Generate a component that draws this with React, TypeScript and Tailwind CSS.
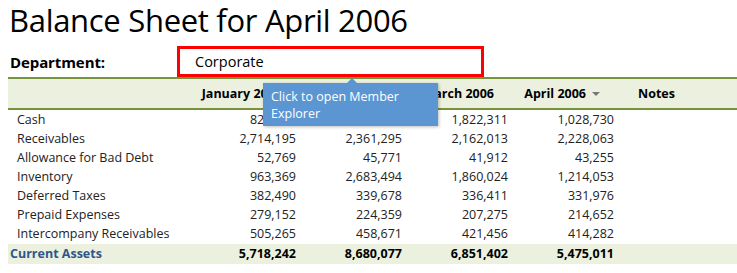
import React from 'react'

const months = ['January 2006', 'February 2006', 'March 2006', 'April 2006']

const rows: { label: string; values: string[] }[] = [
  { label: 'Cash', values: ['823,015', '1,567,480', '1,822,311', '1,028,730'] },
  { label: 'Receivables', values: ['2,714,195', '2,361,295', '2,162,013', '2,228,063'] },
  { label: 'Allowance for Bad Debt', values: ['52,769', '45,771', '41,912', '43,255'] },
  { label: 'Inventory', values: ['963,369', '2,683,494', '1,860,024', '1,214,053'] },
  { label: 'Deferred Taxes', values: ['382,490', '339,678', '336,411', '331,976'] },
  { label: 'Prepaid Expenses', values: ['279,152', '224,359', '207,275', '214,652'] },
  { label: 'Intercompany Receivables', values: ['505,265', '458,671', '421,456', '414,282'] },
]

const totals = ['5,718,242', '8,680,077', '6,851,402', '5,475,011']

export default function App() {
  return (
    <div
      className="relative w-[737px] h-[273px] bg-white text-black overflow-hidden"
      style={{ fontFamily: '"Open Sans", "Noto Sans", sans-serif' }}
    >
      {/* Title */}
      <div className="h-[46px] pl-[9px] text-[31px] leading-[40px] tracking-[-0.3px]">
        Balance Sheet for April 2006
      </div>

      {/* Department picker */}
      <div className="flex items-center h-[31px]">
        <div className="w-[177px] pl-[10px] pt-[1px] font-bold text-[15px] tracking-[-0.1px]">Department:</div>
        <div className="w-[307px] h-[31px] border-[3px] border-[#ff0000] flex items-center pl-[15px] pt-[1px] text-[14.5px]">
          Corporate
        </div>
      </div>

      {/* Table */}
      <div className="ml-[8px] text-[12.5px]">
        <div className="flex h-[33px] items-center pt-[2px] bg-[#ebf0df] border-y-2 border-[#77933c] font-bold">
          <div className="w-[182px]" />
          {months.map((m, i) => (
            <div key={m} className="w-[106px] text-right pr-[14px] whitespace-nowrap">
              {m}
              {i === 3 && (
                <span className="inline-block ml-[6px] mb-[2px] align-middle w-0 h-0 border-l-[4px] border-r-[4px] border-t-[4px] border-l-transparent border-r-transparent border-t-[#777]" />
              )}
            </div>
          ))}
          <div className="pl-[24px]">Notes</div>
        </div>

        <div className="pt-[1px]">
          {rows.map((r) => (
            <div key={r.label} className="flex h-[19px] items-center text-[#222]">
              <div className="w-[182px] pl-[9px] whitespace-nowrap">{r.label}</div>
              {r.values.map((v, i) => (
                <div key={i} className="w-[106px] text-right">{v}</div>
              ))}
            </div>
          ))}
        </div>

        <div className="flex h-[20px] items-center bg-[#ebf0df] font-bold">
          <div className="w-[182px] pl-[2px] text-[#2f568c]">Current Assets</div>
          {totals.map((v, i) => (
            <div key={i} className="w-[106px] text-right">{v}</div>
          ))}
        </div>
      </div>

      {/* Tooltip */}
      <div className="absolute left-[263px] top-[83px] w-[175px] h-[43px] bg-[#5b95d2] text-white text-[12.5px] leading-[17px] pl-[8px] pt-[5px] shadow-[1px_1px_3px_rgba(0,0,0,0.25)]">
        <div className="absolute -top-[5px] left-[83px] w-0 h-0 border-l-[6px] border-r-[6px] border-b-[6px] border-l-transparent border-r-transparent border-b-[#5b95d2]" />
        Click to open Member
        <br />
        Explorer
      </div>
    </div>
  )
}
